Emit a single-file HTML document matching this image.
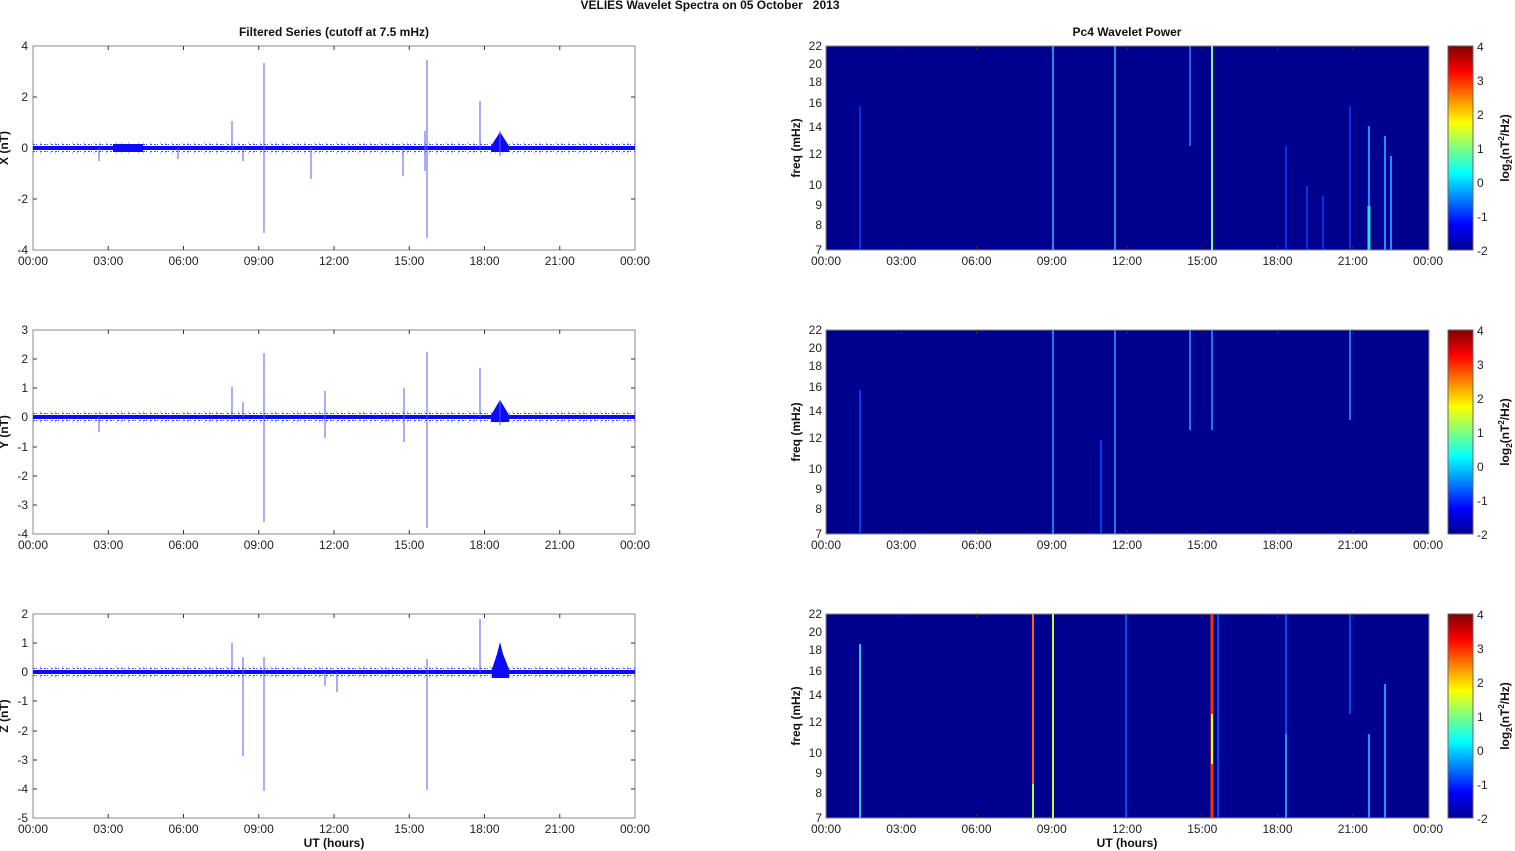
<!DOCTYPE html>
<html><head><meta charset="utf-8"><style>
body{margin:0;background:#fff;}
svg{display:block;font-family:"Liberation Sans",Arial,sans-serif;}
.t{font-size:12px;fill:#222}
.b{font-size:12px;font-weight:bold;fill:#111}
</style></head><body>
<svg width="1515" height="851" viewBox="0 0 1515 851" xmlns="http://www.w3.org/2000/svg">
<defs>
<linearGradient id="jet" x1="0" y1="1" x2="0" y2="0">
<stop offset="0" stop-color="#00008f"/><stop offset="0.125" stop-color="#0000ff"/><stop offset="0.375" stop-color="#00ffff"/><stop offset="0.625" stop-color="#ffff00"/><stop offset="0.875" stop-color="#ff0000"/><stop offset="1" stop-color="#800000"/>
</linearGradient>
<g id="xt">
<text class="t" x="0" y="15" text-anchor="middle">00:00</text>
<text class="t" x="75.25" y="15" text-anchor="middle">03:00</text>
<text class="t" x="150.5" y="15" text-anchor="middle">06:00</text>
<text class="t" x="225.75" y="15" text-anchor="middle">09:00</text>
<text class="t" x="301" y="15" text-anchor="middle">12:00</text>
<text class="t" x="376.25" y="15" text-anchor="middle">15:00</text>
<text class="t" x="451.5" y="15" text-anchor="middle">18:00</text>
<text class="t" x="526.75" y="15" text-anchor="middle">21:00</text>
<text class="t" x="602" y="15" text-anchor="middle">00:00</text>
</g>
<path id="xtick" d="M75.25 0v4M150.5 0v4M225.75 0v4M301 0v4M376.25 0v4M451.5 0v4M526.75 0v4M75.25 204v-4M150.5 204v-4M225.75 204v-4M301 204v-4M376.25 204v-4M451.5 204v-4M526.75 204v-4" stroke="#333" fill="none"/>
<g id="band">
<rect x="0" y="-2" width="602" height="4" fill="#0a0aff"/>
<path d="M0 -3.5h602M0 3.5h602" stroke="#4a4aff" stroke-width="1" stroke-dasharray="2 1 1 3 2 2"/>
<path d="M0 -5h602M0 5h602" stroke="#8080ff" stroke-width="1" stroke-dasharray="1 6 1 9 1 4"/>
</g>
<g id="cb">
<rect x="0" y="0" width="25" height="204" fill="url(#jet)" stroke="#666"/>
<text class="t" x="29" y="5">4</text><text class="t" x="29" y="39">3</text><text class="t" x="29" y="73">2</text><text class="t" x="29" y="107">1</text><text class="t" x="29" y="141">0</text><text class="t" x="29" y="175">-1</text><text class="t" x="29" y="209">-2</text>
<text class="b" transform="translate(61,102) rotate(-90)" text-anchor="middle">log<tspan font-size="8" dy="3">2</tspan><tspan dy="-3">(nT</tspan><tspan font-size="8" dy="-5">2</tspan><tspan dy="5">/Hz)</tspan></text>
</g>
<g id="fy">
<text class="t" x="-4" y="4" text-anchor="end">22</text>
<text class="t" x="-4" y="22" text-anchor="end">20</text>
<text class="t" x="-4" y="61" text-anchor="end">16</text>
<text class="t" x="-4" y="40" text-anchor="end">18</text>
<text class="t" x="-4" y="85" text-anchor="end">14</text>
<text class="t" x="-4" y="112" text-anchor="end">12</text>
<text class="t" x="-4" y="143" text-anchor="end">10</text>
<text class="t" x="-4" y="163" text-anchor="end">9</text>
<text class="t" x="-4" y="183" text-anchor="end">8</text>
<text class="t" x="-4" y="208" text-anchor="end">7</text>
<text class="b" transform="translate(-26,102) rotate(-90)" text-anchor="middle">freq (mHz)</text>
</g>
</defs>

<text class="b" x="710" y="9" text-anchor="middle" font-size="11" xml:space="preserve">VELIES Wavelet Spectra on 05 October   2013</text>
<text class="b" x="334" y="36" text-anchor="middle">Filtered Series (cutoff at 7.5 mHz)</text>
<text class="b" x="1127" y="36" text-anchor="middle">Pc4 Wavelet Power</text>

<!-- Left panel X -->
<g transform="translate(33,46)">
<rect width="602" height="204" fill="#fff" stroke="#888"/>
<use href="#xtick"/>
<path d="M0 51h4M0 102h4M0 153h4M602 51h-4M602 102h-4M602 153h-4" stroke="#333"/>
<g transform="translate(0,102)"><use href="#band"/></g>
<rect x="80" y="98" width="30" height="8" fill="#0a0aff"/>
<path d="M458 100L467 86L476 100V106L458 106Z" fill="#0a0aff"/>
<g stroke="#5a5aff" stroke-width="1">
<path d="M231 17V187M394 14V192M447 55V102M199 75V102M210 102V115M278 102V133M370 102V130M467 85V110M66 102V115M145 102V113M392 85V125"/>
</g>
<text class="t" x="-5" y="4" text-anchor="end">4</text><text class="t" x="-5" y="55" text-anchor="end">2</text><text class="t" x="-5" y="106" text-anchor="end">0</text><text class="t" x="-5" y="157" text-anchor="end">-2</text><text class="t" x="-5" y="208" text-anchor="end">-4</text>
<text class="b" transform="translate(-25,102) rotate(-90)" text-anchor="middle">X (nT)</text>
<g transform="translate(0,204)"><use href="#xt"/></g>
</g>

<!-- Left panel Y -->
<g transform="translate(33,330)">
<rect width="602" height="204" fill="#fff" stroke="#888"/>
<use href="#xtick"/>
<path d="M0 29h4M0 58h4M0 87h4M0 117h4M0 146h4M0 175h4M602 29h-4M602 58h-4M602 87h-4M602 117h-4M602 146h-4M602 175h-4" stroke="#333"/>
<g transform="translate(0,87)"><use href="#band"/></g>
<path d="M458 85L467 70L476 85V92L458 92Z" fill="#0a0aff"/>
<g stroke="#5a5aff">
<path d="M231 23V192M394 22V198M199 57V87M210 72V87M292 61V108M371 58V112M447 38V87M467 70V95M66 87V102"/>
</g>
<text class="t" x="-5" y="4" text-anchor="end">3</text><text class="t" x="-5" y="33" text-anchor="end">2</text><text class="t" x="-5" y="62" text-anchor="end">1</text><text class="t" x="-5" y="91" text-anchor="end">0</text><text class="t" x="-5" y="121" text-anchor="end">-1</text><text class="t" x="-5" y="150" text-anchor="end">-2</text><text class="t" x="-5" y="179" text-anchor="end">-3</text><text class="t" x="-5" y="208" text-anchor="end">-4</text>
<text class="b" transform="translate(-25,102) rotate(-90)" text-anchor="middle">Y (nT)</text>
<g transform="translate(0,204)"><use href="#xt"/></g>
</g>

<!-- Left panel Z -->
<g transform="translate(33,614)">
<rect width="602" height="204" fill="#fff" stroke="#888"/>
<use href="#xtick"/>
<path d="M0 29h4M0 58h4M0 87h4M0 117h4M0 146h4M0 175h4M602 29h-4M602 58h-4M602 87h-4M602 117h-4M602 146h-4M602 175h-4" stroke="#333"/>
<g transform="translate(0,58)"><use href="#band"/></g>
<path d="M459 55L464 40L467 28L470 40L476 55V64L459 64Z" fill="#0a0aff"/>
<g stroke="#5a5aff">
<path d="M210 43V142M231 43V177M199 29V58M394 45V176M447 5V58M292 58V72M304 58V78"/>
</g>
<text class="t" x="-5" y="4" text-anchor="end">2</text><text class="t" x="-5" y="33" text-anchor="end">1</text><text class="t" x="-5" y="62" text-anchor="end">0</text><text class="t" x="-5" y="91" text-anchor="end">-1</text><text class="t" x="-5" y="121" text-anchor="end">-2</text><text class="t" x="-5" y="150" text-anchor="end">-3</text><text class="t" x="-5" y="179" text-anchor="end">-4</text><text class="t" x="-5" y="208" text-anchor="end">-5</text>
<text class="b" transform="translate(-25,102) rotate(-90)" text-anchor="middle">Z (nT)</text>
<g transform="translate(0,204)"><use href="#xt"/></g>
<text class="b" x="301" y="233" text-anchor="middle">UT (hours)</text>
</g>

<!-- Right X -->
<g transform="translate(826,46)">
<rect width="603" height="204" fill="#00008f" stroke="#888"/>
<use href="#xtick"/>
<path d="M227 0V204M289 0V204" stroke="#40b0ff" stroke-width="1.5"/>
<path d="M364 0V100" stroke="#3080ff" stroke-width="1.5"/>
<path d="M34 60V204M460 100V204M481 140V204M497 150V204M524 60V204" stroke="#1040ff" stroke-width="1.5"/>
<path d="M386 0V204" stroke="#70ffa0" stroke-width="2"/>
<path d="M543 80V204M559 90V204M565 110V204" stroke="#1a90ff" stroke-width="2"/>
<path d="M543 160V204" stroke="#30e0e0" stroke-width="3"/>
<use href="#fy"/>
<g transform="translate(0,204)"><use href="#xt"/></g>
</g>
<g transform="translate(1448,46)"><use href="#cb"/></g>

<!-- Right Y -->
<g transform="translate(826,330)">
<rect width="603" height="204" fill="#00008f" stroke="#888"/>
<use href="#xtick"/>
<path d="M227 0V204M289 0V204M364 0V100M386 0V100M524 0V90" stroke="#3399ff" stroke-width="1.5"/>
<path d="M34 60V204M275 110V204" stroke="#1050ff" stroke-width="1.5"/>
<use href="#fy"/>
<g transform="translate(0,204)"><use href="#xt"/></g>
</g>
<g transform="translate(1448,330)"><use href="#cb"/></g>

<!-- Right Z -->
<g transform="translate(826,614)">
<rect width="603" height="204" fill="#00008f" stroke="#888"/>
<use href="#xtick"/>
<path d="M34 30V204" stroke="#30c0e0" stroke-width="2"/>
<path d="M207 0V204" stroke="#ff6020" stroke-width="2"/>
<path d="M207 170V204" stroke="#a0ff60" stroke-width="2"/>
<path d="M227 0V204" stroke="#c0ff40" stroke-width="2"/>
<path d="M386 0V204" stroke="#ff3000" stroke-width="3"/>
<path d="M386 100V150" stroke="#d0ff30" stroke-width="2"/>
<path d="M392 0V204M300 0V204M460 0V204M524 0V100" stroke="#1060ff" stroke-width="1.5"/>
<path d="M460 120V204M543 120V204M559 70V204" stroke="#2090ff" stroke-width="2"/>
<use href="#fy"/>
<g transform="translate(0,204)"><use href="#xt"/></g>
<text class="b" x="301" y="233" text-anchor="middle">UT (hours)</text>
</g>
<g transform="translate(1448,614)"><use href="#cb"/></g>
</svg>
</body></html>
